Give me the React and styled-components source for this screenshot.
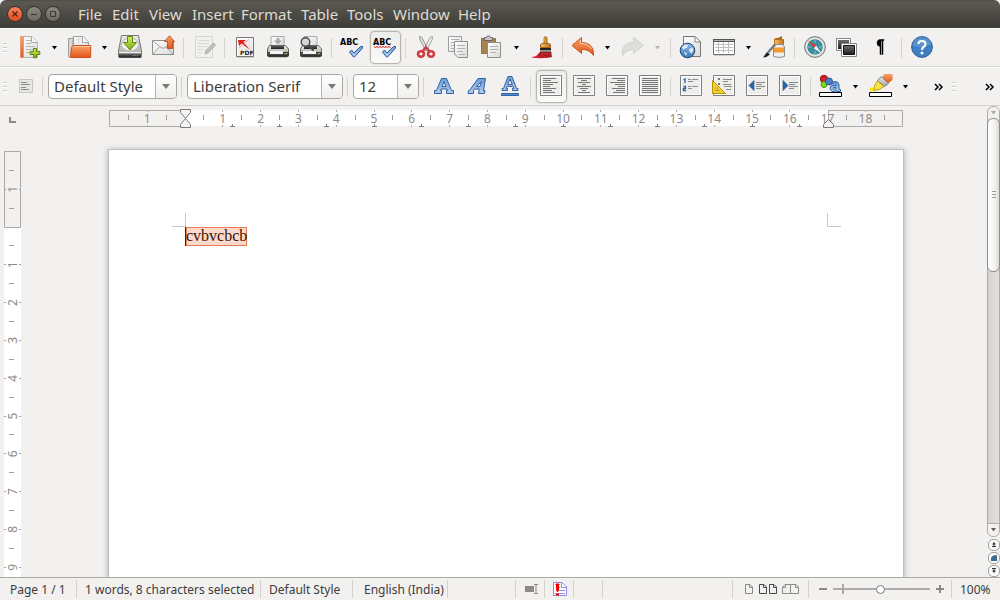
import React, { useEffect, useState } from 'react';
import styled, { createGlobalStyle, css } from 'styled-components';

const Global = createGlobalStyle`
  * { box-sizing: border-box; }
  html, body { margin: 0; height: 100%; }
  body { background: #f2f1f0; font-family: "Noto Sans", "Open Sans", sans-serif; color: #3c3c3c; overflow: hidden; }
  button, select, input { font: inherit; color: inherit; }
  svg { display: block; }
`;

const Window = styled.div`
  display: flex;
  flex-direction: column;
  height: 100vh;
  background: #f2f1f0;
`;

/* ---------- title bar ---------- */
const TitleBar = styled.header`
  display: flex;
  align-items: center;
  flex: none;
  height: 28px;
  padding-left: 7px;
  background: linear-gradient(#4d4b45, #5b5851 2px, #3d3c38);
  border-radius: 6px 6px 0 0;
`;
const WindowButtons = styled.div`
  display: flex;
  gap: 3px;
  margin-right: 12px;
`;
const WindowButton = styled.button`
  width: 16px;
  height: 16px;
  padding: 0;
  border: 1px solid #35342f;
  border-radius: 50%;
  background: ${p => (p.$close ? 'linear-gradient(#f58057, #e2501f)' : 'linear-gradient(#8b887f, #6d6a62)')};
`;
const Menu = styled.nav`
  display: flex;
`;
const MenuItem = styled.button`
  width: ${p => p.$w}px;
  padding: 0 0 0 5px;
  border: 0;
  background: none;
  color: #dfdbd2;
  font-size: 15px;
  line-height: 20px;
  text-align: left;
  white-space: nowrap;
`;

/* ---------- toolbars ---------- */
const Toolbar = styled.div`
  display: flex;
  align-items: center;
  flex: none;
  height: 39px;
  border-top: 1px solid #fbfbfa;
  border-bottom: 1px solid #d6d4d1;
`;
const Handle = styled.span`
  flex: none;
  width: 4px;
  height: 10px;
  margin: 0 7px 0 3px;
  background: repeating-linear-gradient(#cfcdca 0 1px, #fff 1px 2px, transparent 2px 4px);
`;
const Separator = styled.span`
  width: 1px;
  height: 20px;
  margin: 0 4px 0 3px;
  background: #d6d4d1;
`;
const ToolButton = styled.button`
  display: flex;
  align-items: flex-start;
  flex: none;
  width: ${p => (p.$narrow ? 23 : 31)}px;
  height: 33px;
  margin: 0 1px;
  padding: ${p => (p.$narrow ? 7 : 3)}px 0 0 2px;
  border: 1px solid transparent;
  border-radius: 4px;
  background: none;
  ${p => p.$active && css`
    border-color: #b9b6b2;
    background: linear-gradient(#ececea, #fafaf9);
    box-shadow: 0 0 0 1px #e6e4e1;
  `}
`;
const ArrowButton = styled.button`
  display: flex;
  align-items: center;
  justify-content: center;
  flex: none;
  width: 17px;
  height: 33px;
  padding: 0 2px 0 0;
  border: 0;
  background: none;
`;
const Overflow = styled.button`
  flex: none;
  width: 12px;
  margin-right: 4px;
  padding: 0 1px;
  border: 0;
  background: none;
`;
const Spacer = styled.span`
  flex: ${p => (p.$w ? 'none' : '1')};
  width: ${p => (p.$w ? p.$w + 'px' : 'auto')};
`;
const Lead = styled.span`
  flex: none;
  width: 14px;
  display: flex;
`;

const Combo = styled.label`
  display: grid;
  grid-template-columns: 1fr 21px;
  flex: none;
  width: ${p => p.$w}px;
  height: 25px;
  margin: 0 1px;
  border: 1px solid #a9a6a2;
  border-radius: 4px;
  background: #fff;
  overflow: hidden;
`;
const Select = styled.select`
  grid-area: 1 / 1 / 2 / 3;
  appearance: none;
  width: 100%;
  padding: 0 0 0 5px;
  border: 0;
  background: transparent;
  font-size: 15px;
  line-height: 23px;
`;
const ComboArrow = styled.span`
  grid-area: 1 / 2 / 2 / 3;
  display: flex;
  align-items: center;
  justify-content: center;
  border-left: 1px solid #b5b2ae;
  background: linear-gradient(#fefefe, #f0efed);
  pointer-events: none;
`;

/* ---------- workspace ---------- */
const Workspace = styled.main`
  display: flex;
  flex: 1;
  min-height: 0;
`;
const DocumentArea = styled.div`
  display: grid;
  grid-template-columns: 25px 1fr;
  grid-template-rows: 38px 1fr;
  flex: 1;
  min-width: 0;
  overflow: hidden;
`;
const Corner = styled.div`
  padding: 11px 0 0 9px;
`;
const TopRuler = styled.div`
  display: flex;
  justify-content: center;
  padding-top: 3px;
`;
const SideRuler = styled.div`
  padding: 7px 0 0 4px;
  min-height: 0;
  overflow: hidden;
`;
const Desk = styled.div`
  display: flex;
  justify-content: center;
  min-height: 0;
  padding-top: 5px;
  overflow: hidden;
`;
const Page = styled.article`
  flex: none;
  width: 796px;
  height: 1123px;
  padding-top: 63px;
  border: 1px solid #c0bfbe;
  background: #fff;
  box-shadow: 0 1px 6px rgba(0, 0, 0, 0.3);
`;
const Crops = styled.div`
  display: flex;
  justify-content: space-between;
  padding: 0 62px 0 63px;
`;
const Crop = styled.span`
  width: 14px;
  height: 14px;
  border-bottom: 1px solid #c8c8c8;
  ${p => (p.$right ? 'border-left' : 'border-right')}: 1px solid #c8c8c8;
`;
const Paragraph = styled.p`
  margin: 0 76px;
  color: #000;
  font-family: "Liberation Serif", serif;
  font-size: 16px;
  line-height: 16px;
`;
const Selected = styled.mark`
  display: inline-block;
  padding: 1px 0 2px;
  border-left: 1px solid #0b2c50;
  background: #fbdacd;
  box-shadow: inset 0 0 0 1px #e87c4c;
  color: #3a1206;
`;

const ScrollColumn = styled.aside`
  display: flex;
  flex-direction: column;
  align-items: center;
  gap: 1px;
  flex: none;
  width: 13px;
`;
const ScrollTrack = styled.div`
  display: flex;
  flex-direction: column;
  flex: 1;
  width: 13px;
  margin-bottom: 1px;
  border: 1px solid #aeaca8;
  border-radius: 6px;
  background: linear-gradient(90deg, #d5d3d1, #e2e1df);
`;
const ScrollArrow = styled.button`
  display: flex;
  align-items: center;
  justify-content: center;
  flex: none;
  height: 12px;
  padding: 0;
  border: 0;
  border-radius: ${p => (p.$down ? '0 0 6px 6px' : '6px 6px 0 0')};
  background: #f2f1f0;
`;
const ScrollThumb = styled.div`
  display: flex;
  align-items: center;
  justify-content: center;
  height: 36%;
  margin: -1px -1px 0;
  border: 1px solid #8f8d89;
  border-radius: 6px;
  background: linear-gradient(90deg, #fff, #f4f3f2 60%, #dddbd9);
`;
const ScrollRest = styled.div`
  flex: 1;
  border-bottom: 1px solid #aeaca8;
`;
const RoundButton = styled.button`
  display: flex;
  align-items: center;
  justify-content: center;
  flex: none;
  width: 12px;
  height: 12px;
  padding: 0;
  border: 1px solid #a3a19d;
  border-radius: 5px;
  background: #fafafa;
`;

/* ---------- status bar ---------- */
const StatusBar = styled.footer`
  display: flex;
  align-items: center;
  flex: none;
  height: 23px;
  border-top: 1px solid #aaa8a5;
  font-size: 12px;
  line-height: 16px;
`;
const Segment = styled.div`
  display: flex;
  align-items: center;
  flex: ${p => (p.$w ? 'none' : '1')};
  width: ${p => (p.$w ? p.$w + 'px' : 'auto')};
  height: 18px;
  padding-left: ${p => p.$pad || 8}px;
  border-left: ${p => (p.$first ? '0' : '1px solid #d3d1ce')};
  white-space: nowrap;
`;
const StatusText = styled.span`
  padding-top: 2px;
`;
const PlainButton = styled.button`
  display: flex;
  padding: 0;
  border: 0;
  background: none;
`;
const ViewButtons = styled.div`
  display: flex;
  gap: 5px;
`;
const ZoomRow = styled.div`
  display: flex;
  align-items: center;
  gap: 6px;
`;
const ZoomSlider = styled.input`
  appearance: none;
  width: 97px;
  height: 10px;
  margin: 0;
  background:
    linear-gradient(#aeacaa, #aeacaa) 9px 0 / 2px 10px no-repeat,
    linear-gradient(#aeacaa, #aeacaa) 0 4px / 100% 2px no-repeat;
  &::-webkit-slider-thumb {
    appearance: none;
    width: 9px;
    height: 9px;
    border: 1px solid #7a7875;
    border-radius: 50%;
    background: #fff;
  }
`;

/* ---------- icons ---------- */
const Svg = ({ w = 24, h = 24, children }) => (
  <svg width={w} height={h} viewBox={`0 0 ${w} ${h}`} fill="none" aria-hidden="true">{children}</svg>
);
const Down = ({ color = '#000', w = 5 }) => (
  <Svg w={w} h={4}><path d={`M0 0H${w}L${w / 2} 3.4Z`} fill={color} /></Svg>
);
const HiddenSvg = styled.svg`
  position: absolute;
`;
const Defs = () => (
  <HiddenSvg width="0" height="0" aria-hidden="true">
    <defs>
      <linearGradient id="green" x2="0" y2="1"><stop stopColor="#d6ee5c" /><stop offset="1" stopColor="#7dab12" /></linearGradient>
      <linearGradient id="orange" x2="0" y2="1"><stop stopColor="#f9a468" /><stop offset="1" stopColor="#e4551b" /></linearGradient>
      <linearGradient id="paper" x2="1" y2="1"><stop stopColor="#fff" /><stop offset="1" stopColor="#d9d9d7" /></linearGradient>
      <linearGradient id="metal" x2="0" y2="1"><stop stopColor="#ececea" /><stop offset="1" stopColor="#a3a3a1" /></linearGradient>
      <linearGradient id="dark" x2="0" y2="1"><stop stopColor="#6e6e6c" /><stop offset="1" stopColor="#1f1f1f" /></linearGradient>
      <linearGradient id="blue" x2="0" y2="1"><stop stopColor="#8fb9e6" /><stop offset="1" stopColor="#3f76b8" /></linearGradient>
      <linearGradient id="letter" x2="0" y2="1"><stop stopColor="#6c9ed6" /><stop offset="1" stopColor="#b3cdea" /></linearGradient>
      <linearGradient id="wood" x2="1"><stop stopColor="#f7c069" /><stop offset="1" stopColor="#bf7117" /></linearGradient>
    </defs>
  </HiddenSvg>
);

const NewIcon = () => (
  <Svg>
    <path d="M4 1.500H14L19.500 7V22.500H4Z" fill="url(#paper)" stroke="#b5b5b3" />
    <path d="M2.500 1.500H5.500V22.500H2.500Z" fill="url(#orange)" stroke="#e08a5a" strokeWidth=".6" />
    <path d="M13.500 1.500V7.500H19.500" fill="#f6f6f5" stroke="#a9a9a7" />
    <path d="M8 5.500H13M8 8.500H13M8 11.500H17M8 14.500H15M8 17.500H12" stroke="#b6b6b4" />
    <path d="M15.500 13.500H18.500V16.500H21.800V19.500H18.500V22.800H15.500V19.500H12.200V16.500H15.500Z" fill="url(#green)" stroke="#56830f" />
  </Svg>
);
const OpenIcon = () => (
  <Svg>
    <path d="M.5 22V3.500H4L5 2.500V22Z" fill="#d9d7d4" stroke="#9f9d9a" />
    <path d="M5.500 1.500H15L20.500 7V14H5.500Z" fill="url(#paper)" stroke="#9a9a98" />
    <path d="M14.500 1.500V7.500H20.500" fill="#fff" stroke="#a9a9a7" />
    <path d="M10.500 3V9M8 4H13" stroke="#d5d5d3" />
    <path d="M3.500 12.500L5 10.500H22.800L22.500 22.500H2.500Z" fill="url(#orange)" stroke="#c9521d" />
    <path d="M5.500 11.500H22.200" stroke="#fdc9a4" />
  </Svg>
);
const SaveIcon = () => (
  <Svg>
    <path d="M3.500 .5H20.500L23.500 16V21.500Q23.500 22.500 22.500 22.500H1.500Q.5 22.500.5 21.500V16Z" fill="url(#metal)" stroke="#777775" />
    <path d="M1 18.500H23V22.500H1Z" fill="url(#dark)" />
    <path d="M1 17.500H23" stroke="#f2f2f0" />
    <ellipse cx="12" cy="9.500" rx="8.500" ry="6.500" fill="#f2f2f0" stroke="#b8b8b6" />
    <path d="M9.500 1.500H14.500V7.500H18.500L12 15L5.500 7.500H9.500Z" fill="url(#green)" stroke="#5b8a12" />
    <path d="M15 20.500H20" stroke="#8c8c8a" strokeDasharray="1 1" />
  </Svg>
);
const MailIcon = () => (
  <Svg>
    <path d="M1.500 5.500H22.500V19.500H1.500Z" fill="url(#paper)" stroke="#8e8e8c" />
    <path d="M2 6L10 12.500Q12 14 14 12.500L22 6M2 19L8.500 12M22 19L15.500 12" stroke="#a3a3a1" />
    <path d="M18.500 .8L23.500 6.500H21.500V13.500H16.500V6.500H13.500Z" fill="url(#orange)" stroke="#c4501c" />
  </Svg>
);
const EditIcon = () => (
  <Svg>
    <path d="M3.500 1.500H20.500V22.500H3.500Z" fill="#f0f0ef" stroke="#d6d6d4" />
    <path d="M6 5.500H18M6 8.500H17M6 11.500H15M6 14.500H11M6 17.500H10" stroke="#d9d9d7" />
    <path d="M13 19L14 15.500L21.500 8L23.500 10L16.300 17.700Z" fill="#c0c0be" stroke="#adadab" />
  </Svg>
);
const PdfIcon = () => (
  <Svg>
    <path d="M3.500 2.500H20.500V21.500H3.500Z" fill="#fff" stroke="#777775" />
    <path d="M4.500 3.500H19.500V20.500H4.500Z" fill="url(#paper)" />
    <path d="M5 5H13L10.500 7L16.500 14.500L8.500 8.500L6 11Z" fill="#e01b1b" />
    <path d="M6 13L16 4.500" stroke="#f0a0a0" />
    <path d="M7 15H19V20H7Z" fill="#fff" />
    <text x="7" y="20" fontSize="6" fontWeight="700" fontFamily="DejaVu Sans, sans-serif" fill="#111">PDF</text>
    <path d="M3 22.500H21" stroke="#cfcecc" />
  </Svg>
);
const PrinterBody = () => (
  <>
    <path d="M5 1.500H18V12H5Z" fill="url(#paper)" stroke="#a9a9a7" />
    <path d="M3.500 10.500H19.500L22.500 14V19.500H1.500V14Z" fill="url(#metal)" stroke="#666664" />
    <path d="M5 10H18V14H5Z" fill="url(#dark)" />
    <path d="M1.500 17.500H22.500V20.500Q22.500 21.500 21.500 21.500H2.500Q1.500 21.500 1.500 20.500Z" fill="url(#dark)" stroke="#3a3a38" />
    <path d="M4 17.500H17" stroke="#f4f4f2" strokeWidth="3" />
    <path d="M19 18.500H21" stroke="#8fd02c" />
    <path d="M3 22.500H21" stroke="#c6c5c3" />
  </>
);
const PrintIcon = () => (
  <Svg><PrinterBody /><path d="M10.500 3H13.500V5.500H16L12 9.500L8 5.500H10.500Z" fill="#a9a9a7" /></Svg>
);
const PreviewIcon = () => (
  <Svg>
    <PrinterBody />
    <circle cx="6.500" cy="7" r="4.300" fill="#d3d6d7" stroke="#4a4a48" strokeWidth="1.400" />
    <path d="M10 10.500L14 15" stroke="#4a4a48" strokeWidth="2.200" strokeLinecap="round" />
  </Svg>
);
const SpellIcon = ({ wavy }) => (
  <Svg>
    <text x="0" y="10" fontSize="8" fontWeight="700" fontFamily="DejaVu Sans, sans-serif" fill="#000">ABC</text>
    {wavy && <path d="M1 11.500L2.500 12.500L4 11.500L5.500 12.500L7 11.500L8.500 12.500L10 11.500L11.500 12.500L13 11.500L14.500 12.500L16 11.500L17.500 12.500" stroke="#e01b1b" />}
    <path d="M9.500 17L11.500 15L14 18L20.500 11.500H22.500V13L14.500 22H13.500Z" fill="url(#letter)" stroke="#2b5c9e" />
  </Svg>
);
const CutIcon = () => (
  <Svg>
    <path d="M5.500 1.500L7.500 2L14.500 15L12 16L6 5Z" fill="#dededc" stroke="#858583" strokeWidth=".8" />
    <path d="M18.500 1.500L16.500 2L9.500 15L12 16L18 5Z" fill="#f4f4f2" stroke="#858583" strokeWidth=".8" />
    <ellipse cx="7" cy="19" rx="3" ry="2.700" stroke="#cf3a3e" strokeWidth="2.600" />
    <ellipse cx="17" cy="19" rx="3" ry="2.700" stroke="#cf3a3e" strokeWidth="2.600" />
    <path d="M8.500 16L12 12.500L15.500 16" stroke="#cf3a3e" strokeWidth="2.400" />
    <path d="M12 9.500V12" stroke="#777775" />
  </Svg>
);
const CopyIcon = () => (
  <Svg>
    <path d="M1.500 1.500H14.500V16.500H1.500Z" fill="url(#paper)" stroke="#9e9e9c" />
    <path d="M4 4.500H12M4 7.500H12M4 10.500H7M4 13.500H7" stroke="#b1b1af" />
    <path d="M7.500 6.500H20.500V22.500H11L7.500 19Z" fill="url(#paper)" stroke="#8e8e8c" />
    <path d="M10 10.500H18M10 13.500H18M10 16.500H16M12 19.500H18" stroke="#b1b1af" />
  </Svg>
);
const PasteIcon = () => (
  <Svg>
    <path d="M1.500 3.500H15.500V18.500H1.500Z" fill="#a5844f" stroke="#8d744a" />
    <path d="M4.500 2.500H6.500L7.500 1H9.500L10.500 2.500H12.500V5.500H4.500Z" fill="#c6c6c4" stroke="#666664" />
    <path d="M7.500 7.500H20.500V22.500H7.500Z" fill="url(#paper)" stroke="#8e8e8c" />
    <path d="M10 11.500H18M10 14.500H18M10 17.500H16" stroke="#b1b1af" />
  </Svg>
);
const BrushIcon = () => (
  <Svg>
    <path d="M1 22.500Q7 21.500 9 18H20V22.500Q10 24 1 22.500Z" fill="#d9202c" />
    <path d="M14 2.500Q15.500.5 17 2.500V9H14Z" fill="url(#wood)" stroke="#a1651a" strokeWidth=".8" />
    <path d="M10.500 9.500Q13 7.500 15.500 8.500Q18 7.500 20.500 9.500V12.500H10.500Z" fill="url(#wood)" stroke="#a1651a" />
    <path d="M10 13H21V15H10Z" fill="#222" />
    <path d="M10 15H21V17H10Z" fill="#9a9a98" />
    <path d="M10 17H21L21.500 22H19L18 20L17 22.500L15 20L12 22.500L9 20Z" fill="#b3262e" stroke="#7d1018" strokeWidth=".6" />
  </Svg>
);
const UndoIcon = () => (
  <Svg>
    <path d="M10.500 2.500V7.500Q21 7.500 22.500 17V20.500Q18 14 10.500 14.500V18.500L1 10.500Z" fill="url(#orange)" stroke="#c9581f" strokeLinejoin="round" />
    <path d="M9.500 5V8.500Q17 8.500 20.500 14" stroke="#fcd0ad" />
  </Svg>
);
const RedoIcon = () => (
  <Svg>
    <path d="M12.500 2.500V7.500Q2 7.500 1.500 17V20.500Q6 14 12.500 14.500V18.500L22.500 10.500Z" fill="#dededc" stroke="#cfcfcd" strokeLinejoin="round" />
  </Svg>
);
const GlobeIcon = () => (
  <Svg>
    <path d="M4.500 1.500H16L21.500 7V21.500H4.500Z" fill="url(#paper)" stroke="#777775" />
    <path d="M16 1.500V7H21.500Z" fill="#fff" stroke="#888886" />
    <circle cx="8.500" cy="15.500" r="7.300" fill="url(#blue)" stroke="#1f4477" />
    <path d="M3 12L6 9.500L9 10L8 13L5.500 13.500L4.500 15ZM10 14L13.500 12.500L14.500 15L12.500 18.500L10.500 17ZM5 17L8 18L7 21Z" fill="#dbe8f6" />
  </Svg>
);
const TableIcon = () => (
  <Svg>
    <path d="M1.500 4.500H22.500V19.500H1.500Z" fill="#fff" stroke="#70706e" />
    <path d="M1.500 4.500H22.500V6.500H1.500Z" fill="#b1b1af" stroke="#555553" />
    <path d="M3 9.500H21M3 12.500H21M3 15.500H21M6.500 7V18M11.500 7V18M16.500 7V18" stroke="#bdbdbb" />
    <path d="M2 20.500H22" stroke="#cfcecc" />
  </Svg>
);
const DrawIcon = () => (
  <Svg>
    <path d="M14 3H16L20 1V4H21V5H12V4Z" fill="#a86a17" />
    <path d="M12.500 4.500H21.500V9.500H12.500Z" fill="url(#wood)" stroke="#b9701b" />
    <path d="M13.500 9.500H20.500L22.500 12V21.500Q17 23.500 11.500 21.500V12Z" fill="#eee" stroke="#8e8e8c" />
    <path d="M12 12.500H22V17.500H12Z" fill="#f39a2d" />
    <path d="M1 22.500L5 17L8 19.500Q5 22.500 1 22.500Z" fill="#222" />
    <path d="M6 17.500L13 9.500" stroke="#777775" strokeWidth="2.200" />
  </Svg>
);
const CompassIcon = () => (
  <Svg>
    <circle cx="12" cy="12" r="10.400" fill="#d8d8d6" stroke="#797977" />
    <circle cx="12" cy="12" r="8.300" fill="#3d8fa0" stroke="#f4f4f2" />
    <path d="M12 5V8M12 16V19M5 12H8M16 12H19" stroke="#7cc3d0" />
    <path d="M5.500 5.500L13.200 10.800L10.800 13.200Z" fill="#e33a2f" />
    <path d="M18.500 18.500L13.200 10.800L10.800 13.200Z" fill="#f2f2f0" />
  </Svg>
);
const GalleryIcon = () => (
  <Svg>
    <path d="M.5 3.500H14.500V15.500H.5Z" fill="#fff" stroke="#888886" />
    <path d="M2 5H13V14H2Z" fill="url(#dark)" />
    <path d="M5.500 8.500H20.500V21.500H5.500Z" fill="#fff" stroke="#888886" />
    <path d="M7.500 10.500H18.500V19.500H7.500Z" fill="url(#dark)" stroke="#111" />
  </Svg>
);
const PilcrowIcon = () => (
  <Svg><path d="M15 4.500H10.500Q8 5 8 8Q8 11 11 11.500V19.500H12V5.500H13V19.500H14V5.500H15Z" fill="#000" stroke="#000" strokeWidth=".5" /></Svg>
);
const HelpIcon = () => (
  <Svg>
    <circle cx="12" cy="12" r="10.400" fill="#3f7fc0" stroke="#2c5f9b" />
    <path d="M2.500 11Q12 14 21.500 9Q19 2.500 12 2.300Q4 2.500 2.500 11Z" fill="#6b9fd4" opacity=".6" />
    <path d="M8.500 9Q8.500 6 12 6Q15.500 6 15.500 9Q15.500 11 13.500 12Q12 13 12 15" stroke="#fff" strokeWidth="2.200" />
    <circle cx="12" cy="18" r="1.500" fill="#fff" />
  </Svg>
);

const ParagraphIcon = () => (
  <Svg w={16} h={16}>
    <path d="M1.500 1.500H14.500V14.500H1.500Z" fill="#e6e6e4" stroke="#c6c5c3" />
    <path d="M3 4.500H9M3 6.500H12M3 9.500H8M3 11.500H11" stroke="#8b8b89" />
  </Svg>
);
const LETTER_A = 'M9.500 4.500H14.500L19.500 16.500H21.500V19.500H14.500V16.500H15.500L15 15H9L8.500 16.500H9.500V19.500H2.500V16.500H4.500ZM12 7.500L10 12.500H14Z';
const BoldIcon = () => (
  <Svg><path d={LETTER_A} fill="url(#letter)" stroke="#2f62a6" fillRule="evenodd" /></Svg>
);
const ItalicIcon = () => (
  <Svg><path d="M13 4.500H20.500L18.500 16.500H20L19.500 19.500H13.500L14 16.500L14.300 15H9.500L8.500 16.500L8.500 19.500H3L3.500 16.500H4.500ZM16.500 7.500L11.500 12.500H15Z" fill="url(#letter)" stroke="#2f62a6" fillRule="evenodd" /></Svg>
);
const UnderlineIcon = () => (
  <Svg>
    <path d="M10 2.500H14L18.500 14.500H20V16.500H14.500V14.500H16L15 12.500H9L8 14.500H9.500V16.500H4V14.500H5.500ZM12 5L9.700 10.500H14.300Z" fill="url(#letter)" stroke="#2f62a6" fillRule="evenodd" />
    <path d="M3.500 19.500H20.500V21.500H3.500Z" fill="#5b8fcc" stroke="#2f62a6" />
  </Svg>
);
const Sheet = ({ children }) => (
  <Svg>
    <path d="M1.500 1.500H22.500V21.500H1.500Z" fill="#fff" stroke="#7f7f7d" />
    <path d="M3 3H21V20H3Z" fill="#ededeb" />
    {children}
  </Svg>
);
const ALIGN = {
  left: 'M4 4.500H17M4 6.500H12M4 8.500H19M4 10.500H14M4 12.500H11M4 14.500H17M4 16.500H13M4 18.500H16',
  center: 'M5 4.500H19M9 6.500H15M6 8.500H18M10 10.500H14M5 12.500H19M8 14.500H16M10 16.500H14M6 18.500H18',
  right: 'M7 4.500H20M12 6.500H20M5 8.500H20M10 10.500H20M13 12.500H20M7 14.500H20M11 16.500H20M8 18.500H20',
  justify: 'M4 4.500H20M4 6.500H20M4 8.500H20M4 10.500H20M4 12.500H20M4 14.500H20M4 16.500H20M4 18.500H20',
};
const AlignIcon = ({ kind }) => <Sheet><path d={ALIGN[kind]} stroke="#777775" /></Sheet>;
const NumberingIcon = () => (
  <Sheet>
    <path d="M4.500 6L6 5V9M4.500 12.500H6.500V14.500H4.500V16.500H7" stroke="#2d63a8" strokeWidth="1.300" />
    <path d="M9 5.500H12M13 5.500H19M9 7.500H14M9 12.500H12M13 12.500H19M9 14.500H13" stroke="#8b8b89" />
  </Sheet>
);
const BulletDialogIcon = () => (
  <Sheet>
    <path d="M6 4H8V6H6ZM6 9H8V11H6Z" fill="#777775" />
    <path d="M11 5.500H20M11 7.500H16M11 10.500H19M12 12.500H20M14 15.500H19" stroke="#8b8b89" />
    <path d="M.5 6.500L13.500 19.500H.5Z" fill="#f3d02f" stroke="#b8950c" />
    <path d="M4 13.500V16.500H7Z" fill="#fff" stroke="#b8950c" />
  </Sheet>
);
const IndentIcon = ({ more }) => (
  <Sheet>
    <path d={more ? 'M5 6.500V16.500L10 11.500Z' : 'M9 6.500V16.500L4 11.500Z'} fill="#2d63a8" stroke="#1d4a85" strokeWidth=".6" />
    <path d="M11 8.500H20M11 10.500H17M11 12.500H20M11 14.500H16" stroke="#8b8b89" />
  </Sheet>
);
const FontColorIcon = () => (
  <Svg>
    <circle cx="5" cy="5" r="3.700" fill="#d91f2b" stroke="#8f1119" />
    <circle cx="5" cy="10.500" r="3" fill="#7fdc1c" stroke="#4c9413" />
    <circle cx="10" cy="7.500" r="3.500" fill="#4a80c8" stroke="#27508f" />
    <path d="M12.500 10Q13 7.500 16 7.500Q20 7.500 20 11V15.500H21.500V17.500H17.500V16.500Q15 18.500 12.500 17Q9.500 14 12 12Q14 11 17 11.500Q17 10 15.500 10ZM17 13.500Q14 13 14 14.500Q15 16 17 14.500Z" fill="url(#letter)" stroke="#2f62a6" fillRule="evenodd" />
    <path d="M.5 18.500H22.500V22.500H.5Z" fill="#fff" stroke="#000" />
  </Svg>
);
const HighlightIcon = () => (
  <Svg>
    <path d="M1 13.500H7V17H1Z" fill="#f7e500" />
    <path d="M15 0H23.500V6L19.500 9L13.500 3.500Z" fill="url(#orange)" />
    <path d="M12.500 2.500L19.500 9.500L15.500 12.500L8.500 6.500Z" fill="url(#metal)" stroke="#7c7c7a" />
    <path d="M8.500 7L15 12.500Q11 16.500 5 16.500Q4.500 11 8.500 7Z" fill="#f6e24a" stroke="#c5a312" />
    <path d="M.5 18.500H22.500V22.500H.5Z" fill="#fff" stroke="#000" />
  </Svg>
);
const OverflowIcon = () => (
  <Svg w={10} h={8}><path d="M1 1L4 4L1 7M5 1L8 4L5 7" stroke="#000" strokeWidth="1.500" /></Svg>
);

/* ---------- rulers ---------- */
const CM = 37.8;
const range = (a, b) => Array.from({ length: Math.max(0, b - a + 1) }, (_, i) => a + i);
const px = v => Math.floor(v) + 0.5;

const HorizontalRuler = () => {
  const zero = 76;
  return (
    <svg width="794" height="20" viewBox="0 0 794 20" fill="none" aria-label="Horizontal ruler">
      <path d="M76 1H719V17H76Z" fill="#fff" />
      <path d="M76 1.500H.5V17.500H76M719 1.500H793.500V17.500H719M719.500 1V17" stroke="#aaa9a7" />
      {range(-1, 18).filter(n => n !== 0).map(n => (
        <g key={n}>
          {n !== 17 && <path d={`M${px(zero + n * CM)} 1V3M${px(zero + n * CM)} 16V18`} stroke="#b0afad" />}
          <text x={zero + n * CM} y="14" textAnchor="middle" fontSize="12" fill="#8b8a88">{Math.abs(n)}</text>
        </g>
      ))}
      {range(-2, 18).map(n => (
        <path key={n} d={`M${px(zero + (n + 0.5) * CM)} 6V11`} stroke="#9f9e9c" />
      ))}
      {range(1, 13).map(n => (
        <path key={n} d={`M${px(zero + n * 47.25)} 15V18M${px(zero + n * 47.25) - 2.5} 17.500H${px(zero + n * 47.25) + 2.5}`} stroke="#80807e" />
      ))}
      <path d="M71.500.5H81.500V3.500L76.500 9.500L81.500 15.500V18.500H71.500V15.500L76.500 9.500L71.500 3.500Z" fill="#f4f3f2" stroke="#7c7b79" />
      <path d="M719.500 10.500L724.500 15.500V18.500H714.500V15.500Z" fill="#f4f3f2" stroke="#7c7b79" />
    </svg>
  );
};

const useWindowHeight = () => {
  const [height, setHeight] = useState(window.innerHeight);
  useEffect(() => {
    const update = () => setHeight(window.innerHeight);
    window.addEventListener('resize', update);
    return () => window.removeEventListener('resize', update);
  }, []);
  return height;
};

/* 151px of bars lie above the side ruler and 23px below it */
const VerticalRuler = () => {
  const zero = 76;
  const length = Math.max(zero, useWindowHeight() - 174);
  const last = Math.floor((length - zero) / CM - 0.15);
  return (
    <svg width="17" height={length} viewBox={`0 0 17 ${length}`} fill="none" aria-label="Vertical ruler">
      <path d={`M0 76H17V${length}H0Z`} fill="#fff" />
      <path d="M.5.5H16.500V76.500H.5Z" fill="#f2f1f0" stroke="#aaa9a7" />
      {range(-1, last).filter(n => n !== 0).map(n => (
        <g key={n}>
          <path d={`M0 ${px(zero + n * CM)}H2M15 ${px(zero + n * CM)}H17`} stroke="#a5a4a2" />
          <text transform={`translate(13 ${zero + n * CM}) rotate(-90)`} textAnchor="middle" fontSize="12" fill="#8b8a88">{Math.abs(n)}</text>
        </g>
      ))}
      {range(-2, last).map(n => (
        <path key={n} d={`M5 ${px(zero + (n + 0.5) * CM)}H10`} stroke="#9f9e9c" />
      ))}
    </svg>
  );
};

/* ---------- data ---------- */
const MENUS = [['File', 34], ['Edit', 37], ['View', 43], ['Insert', 49], ['Format', 60], ['Table', 46], ['Tools', 46], ['Window', 65], ['Help', 40]];

const STANDARD = [
  ['New', NewIcon], 'arrow', ['Open', OpenIcon], 'arrow', ['Save', SaveIcon], ['Email', MailIcon], '|',
  ['Edit file', EditIcon], '|', ['Export as PDF', PdfIcon], ['Print', PrintIcon], ['Page preview', PreviewIcon], '|',
  ['Spelling', SpellIcon], ['Auto spellcheck', SpellIcon, { wavy: true }, true], '|',
  ['Cut', CutIcon], ['Copy', CopyIcon], ['Paste', PasteIcon], 'arrow', ['Clone formatting', BrushIcon], '|',
  ['Undo', UndoIcon], 'arrow', ['Redo', RedoIcon], 'faded', '|',
  ['Hyperlink', GlobeIcon], ['Table', TableIcon], 'arrow', ['Show draw functions', DrawIcon], '|',
  ['Navigator', CompassIcon], ['Gallery', GalleryIcon], ['Nonprinting characters', PilcrowIcon], '|', ['Help', HelpIcon],
];
const FORMATTING = [
  ['Bold', BoldIcon], ['Italic', ItalicIcon], ['Underline', UnderlineIcon], '|',
  ['Align left', AlignIcon, { kind: 'left' }, true], ['Centre', AlignIcon, { kind: 'center' }],
  ['Align right', AlignIcon, { kind: 'right' }], ['Justify', AlignIcon, { kind: 'justify' }], '|',
  ['Numbering', NumberingIcon], ['Bullets and numbering', BulletDialogIcon], ['Decrease indent', IndentIcon],
  ['Increase indent', IndentIcon, { more: true }], '|',
  ['Font colour', FontColorIcon], 'arrow', ['Highlighting', HighlightIcon], 'arrow',
];

const Tools = ({ items }) => items.map((item, i) => {
  if (item === '|') return <Separator key={i} />;
  if (item === 'arrow' || item === 'faded') {
    return <ArrowButton key={i} aria-label="More options"><Down color={item === 'faded' ? '#b5b4b2' : '#000'} /></ArrowButton>;
  }
  const [label, Icon, props, active] = item;
  return <ToolButton key={i} aria-label={label} $active={active}><Icon {...props} /></ToolButton>;
});

const ComboBox = ({ label, value, width }) => (
  <Combo $w={width}>
    <Select aria-label={label} defaultValue={value}><option>{value}</option></Select>
    <ComboArrow><Svg w={8} h={5}><path d="M0 0H8L4 5Z" fill="#7b7976" /></Svg></ComboArrow>
  </Combo>
);

export default function App() {
  return (
    <Window>
      <Global />
      <Defs />
      <TitleBar>
        <WindowButtons>
          <WindowButton $close aria-label="Close"><Svg w={14} h={14}><path d="M4.500 4.500L9.500 9.500M9.500 4.500L4.500 9.500" stroke="#5a2412" strokeWidth="1.400" /></Svg></WindowButton>
          <WindowButton aria-label="Minimise"><Svg w={14} h={14}><path d="M4 7.500H10" stroke="#3b3a36" /></Svg></WindowButton>
          <WindowButton aria-label="Maximise"><Svg w={14} h={14}><path d="M4.500 4.500H9.500V9.500H4.500Z" stroke="#3b3a36" /></Svg></WindowButton>
        </WindowButtons>
        <Menu>{MENUS.map(([name, w]) => <MenuItem key={name} $w={w}>{name}</MenuItem>)}</Menu>
      </TitleBar>

      <Toolbar>
        <Lead><Handle /></Lead>
        <Tools items={STANDARD} />
      </Toolbar>

      <Toolbar>
        <Lead><Handle /></Lead>
        <ToolButton $narrow aria-label="Styles"><ParagraphIcon /></ToolButton>
        <Separator />
        <ComboBox label="Paragraph style" value="Default Style" width={129} />
        <Separator />
        <ComboBox label="Font name" value="Liberation Serif" width={156} />
        <Separator />
        <ComboBox label="Font size" value="12" width={66} />
        <Separator />
        <Tools items={FORMATTING} />
        <Spacer />
        <Overflow aria-label="More formatting"><OverflowIcon /></Overflow>
        <Handle />
        <Spacer $w={21} />
        <Overflow aria-label="More tools"><OverflowIcon /></Overflow>
      </Toolbar>

      <Workspace>
        <DocumentArea>
          <Corner><Svg w={7} h={6}><path d="M1 0V5H7" stroke="#8b8a88" strokeWidth="2" /></Svg></Corner>
          <TopRuler><HorizontalRuler /></TopRuler>
          <SideRuler><VerticalRuler /></SideRuler>
          <Desk>
            <Page>
              <Crops><Crop /><Crop $right /></Crops>
              <Paragraph><Selected>cvbvcbcb</Selected></Paragraph>
            </Page>
          </Desk>
        </DocumentArea>
        <ScrollColumn>
          <ScrollTrack>
            <ScrollArrow aria-label="Scroll up"><Down color="#a9a7a4" /></ScrollArrow>
            <ScrollThumb><Svg w={4} h={8}><path d="M0 .5H4M0 3.500H4M0 6.500H4" stroke="#9d9b98" /></Svg></ScrollThumb>
            <ScrollRest />
            <ScrollArrow $down aria-label="Scroll down"><Down color="#5f5e5b" /></ScrollArrow>
          </ScrollTrack>
          <RoundButton aria-label="Previous page"><Svg w={6} h={6}><path d="M3 0L5 2.500H1ZM2.500 2H3.500V4H2.500ZM1 4H5V5H1Z" fill="#333" /></Svg></RoundButton>
          <RoundButton aria-label="Navigation"><Svg w={6} h={6}><path d="M0 6V3Q1 0 6 0V6Z" fill="#3c6a8c" /></Svg></RoundButton>
          <RoundButton aria-label="Next page"><Svg w={6} h={6}><path d="M1 0H5V1H1ZM2.500 1H3.500V3H2.500ZM1 2.500H5L3 5Z" fill="#333" /></Svg></RoundButton>
        </ScrollColumn>
      </Workspace>

      <StatusBar>
        <Segment $first $w={76} $pad={10}><StatusText>Page 1 / 1</StatusText></Segment>
        <Segment $w={184}><StatusText>1 words, 8 characters selected</StatusText></Segment>
        <Segment $w={92}><StatusText>Default Style</StatusText></Segment>
        <Segment $w={95} $pad={11}><StatusText>English (India)</StatusText></Segment>
        <Segment $w={68} />
        <Segment $w={29} $pad={9}><Svg w={13} h={11}><path d="M0 2H9V8H0Z" fill="#8b8a88" /><path d="M9 .5H13M9 9.500H13M11 1V10" stroke="#8b8a88" /></Svg></Segment>
        <Segment $w={29}>
          <Svg w={14} h={14}>
            <path d="M.5.5H9L13.500 5V13.500H.5Z" fill="#fff" stroke="#8f8ce6" />
            <path d="M8.500.5V5.500H13.500M6 5.500H7M6 8.500H12M2 11.500H12M2 2.500H7" stroke="#8f8ce6" />
            <path d="M3 1.500H6V8L5 10H4L3 8ZM3 11.500H6V13.500H3Z" fill="#f00000" />
          </Svg>
        </Segment>
        <Segment $w={29} />
        <Segment />
        <Segment $w={76} $pad={12}>
          <ViewButtons>
            <PlainButton aria-label="Single page"><Svg w={8} h={10}><path d="M.5.500H5L7.500 3V9.500H.5ZM4.500.5V3.500H7.500" stroke="#8b8a88" /></Svg></PlainButton>
            <PlainButton aria-label="Multiple pages"><Svg w={19} h={10}><path d="M1.500.500H6L8.500 3V9.500H1.500ZM5.500.5V3.500H8.500M11.500.5H16L18.500 3V9.500H11.500ZM15.500.5V3.500H18.500" stroke="#4a4947" /></Svg></PlainButton>
            <PlainButton aria-label="Book view"><Svg w={17} h={10}><path d="M3 .500H8.500V9.500H.5V3ZM.5 3.500H3.500V.5M8.500.5H14L16.500 3V9.500H8.500M13.500.5V3.500H16.500" stroke="#8b8a88" /></Svg></PlainButton>
          </ViewButtons>
        </Segment>
        <Segment $w={143} $pad={10}>
          <ZoomRow>
            <PlainButton aria-label="Zoom out"><Svg w={8} h={8}><path d="M0 4H8" stroke="#8b8a88" strokeWidth="2" /></Svg></PlainButton>
            <ZoomSlider type="range" min="0" max="100" defaultValue="49" aria-label="Zoom" />
            <PlainButton aria-label="Zoom in"><Svg w={8} h={8}><path d="M0 4H8M4 0V8" stroke="#8b8a88" strokeWidth="2" /></Svg></PlainButton>
          </ZoomRow>
        </Segment>
        <Segment $w={49}><StatusText>100%</StatusText></Segment>
      </StatusBar>
    </Window>
  );
}
